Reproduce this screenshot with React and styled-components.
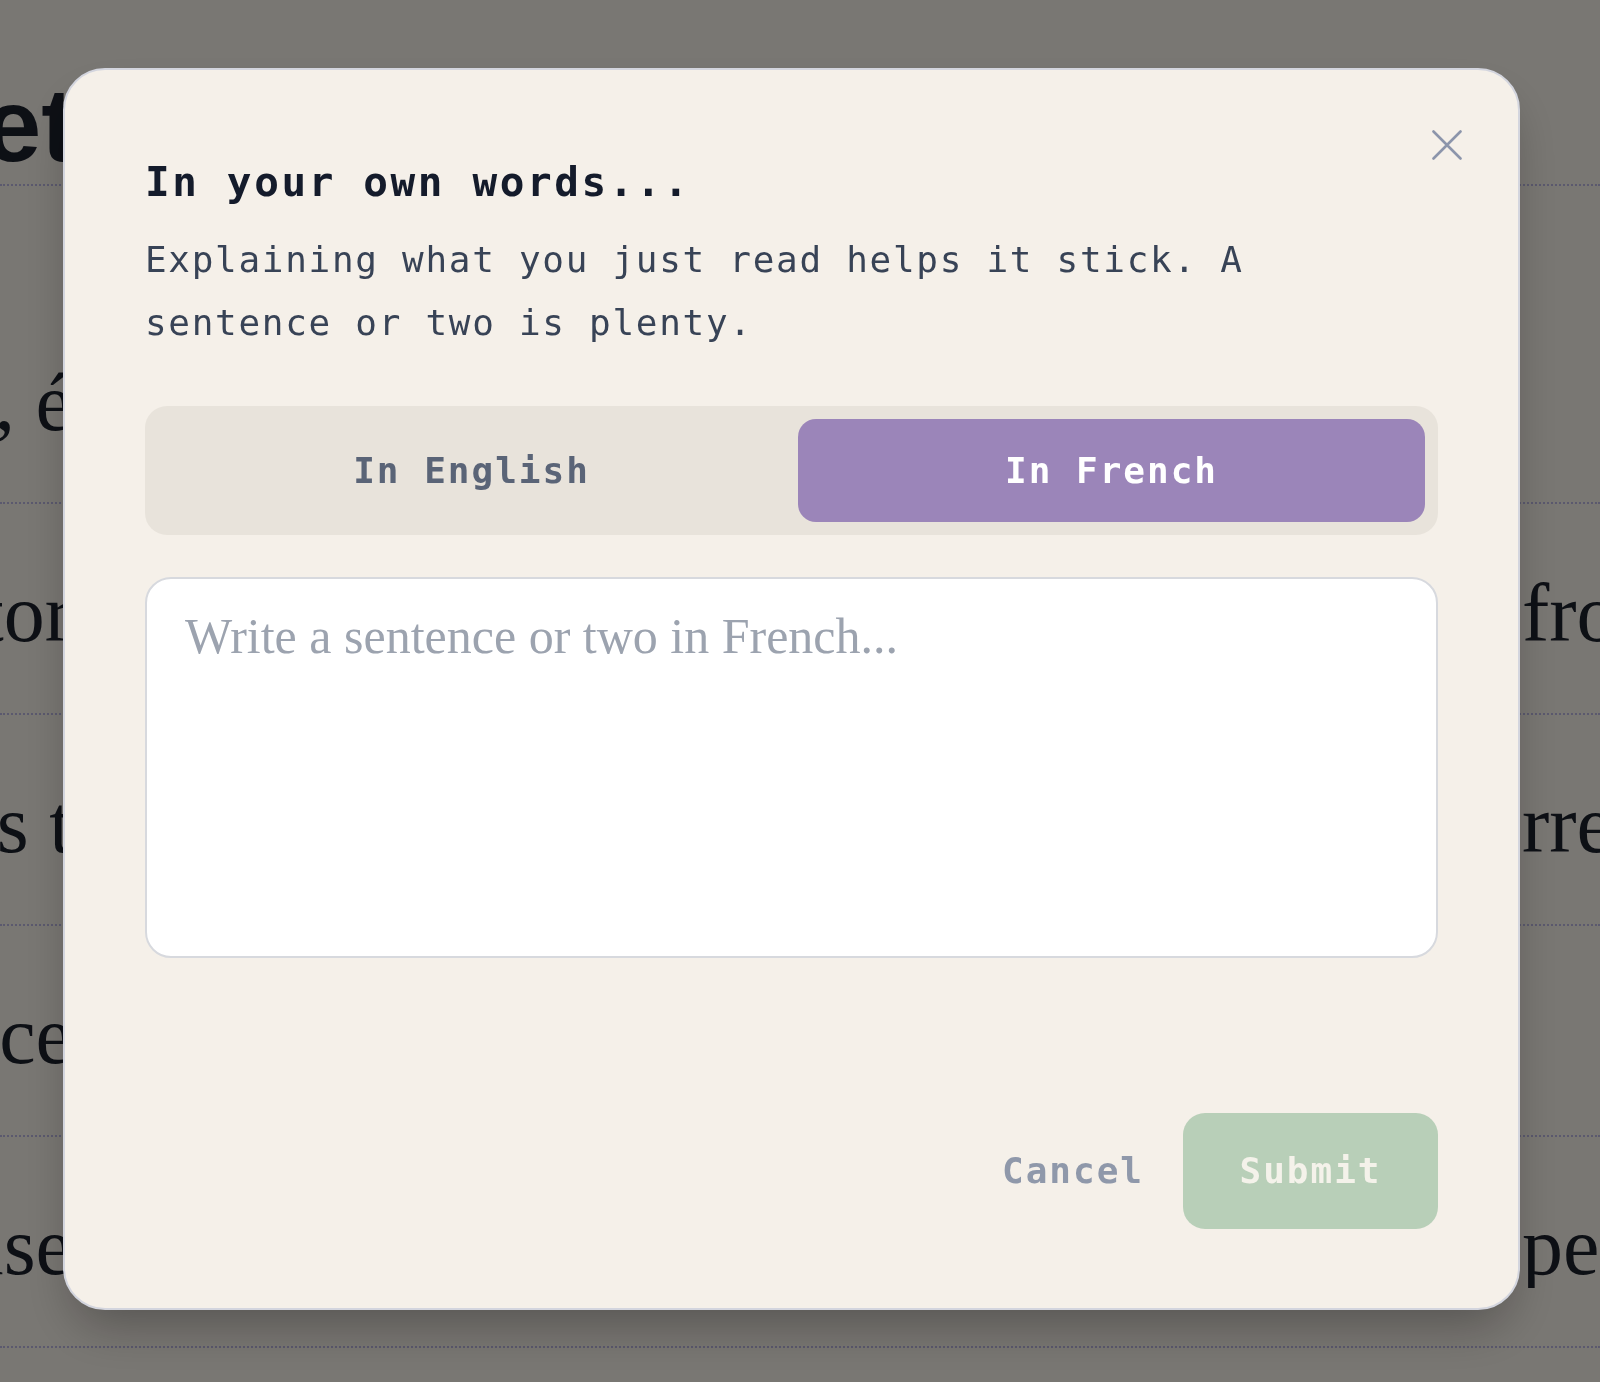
import React, { useState } from 'react'
import styled, { createGlobalStyle } from 'styled-components'

const mono = `"DejaVu Sans Mono", "Liberation Mono", monospace`

const GlobalStyle = createGlobalStyle`
  * { box-sizing: border-box; }
  html, body { margin: 0; padding: 0; }
  body {
    background: #f3eee6;
    font-family: "Liberation Serif", serif;
  }
`

/* page behind the dialog */

const Page = styled.div`
  height: 1382px;
  overflow: hidden;
  color: #1b202b;
`

const Heading = styled.h1`
  margin: 0 0 107px;
  padding: 73px 0 7px;
  font: 700 104px/1 "Liberation Sans", Arial, sans-serif;
  border-bottom: 2px dotted #b6b2dc;
  display: flex;
`

const Line = styled.div`
  height: 211px;
  display: flex;
  align-items: flex-end;
  justify-content: space-between;
  padding-bottom: 58px;
  border-bottom: 2px dotted #b6b2dc;
  font-size: 82px;
  line-height: 1;
`

const Clip = styled.span`
  width: ${p => p.$w}px;
  display: flex;
  justify-content: ${p => (p.$end ? 'flex-end' : 'flex-start')};
  overflow: hidden;
  white-space: nowrap;
`

/* dialog */

const Overlay = styled.div`
  position: fixed;
  inset: 0;
  background: rgba(0, 0, 0, 0.5);
  display: flex;
  align-items: flex-start;
  padding: 68px 80px 0 63px;
`

const Modal = styled.div`
  position: relative;
  flex: 1;
  background: #f5f0e9;
  border: 2px solid #d3d5de;
  border-radius: 42px;
  padding: 88px 80px 79px;
  box-shadow: 0 25px 50px -12px rgba(0, 0, 0, 0.3);
`

const CloseBtn = styled.button`
  position: absolute;
  top: 46px;
  right: 42px;
  width: 58px;
  height: 58px;
  border: none;
  background: none;
  padding: 0;
  display: flex;
  align-items: center;
  justify-content: center;
  color: #8c95ab;
  cursor: pointer;
`

const Title = styled.h2`
  margin: 0;
  font: 700 41px/49px ${mono};
  letter-spacing: 2.6px;
  color: #141b2b;
`

const Subtitle = styled.p`
  margin: 21px 0 0;
  font: 400 36px/63px ${mono};
  letter-spacing: 1.7px;
  color: #384356;
`

const Tabs = styled.div`
  margin-top: 52px;
  display: grid;
  grid-template-columns: 1fr 1fr;
  gap: 13px;
  padding: 13px;
  background: #e8e3db;
  border-radius: 22px;
`

const Tab = styled.button`
  height: 103px;
  border: none;
  border-radius: 18px;
  font: 700 36px/1 ${mono};
  letter-spacing: 2px;
  background: ${p => (p.$active ? '#9b85b9' : 'transparent')};
  color: ${p => (p.$active ? '#ffffff' : '#5a6477')};
  cursor: pointer;
`

const Answer = styled.textarea`
  margin-top: 42px;
  display: block;
  width: 100%;
  height: 381px;
  border: 2px solid #d7d9de;
  border-radius: 26px;
  background: #ffffff;
  padding: 20px 38px;
  font: 400 50px/1.5 "Liberation Serif", Georgia, serif;
  color: #1b202b;
  resize: none;
  outline: none;
  &::placeholder {
    color: #9ca3af;
  }
`

const Footer = styled.div`
  margin-top: 155px;
  display: flex;
  justify-content: flex-end;
  align-items: center;
  gap: 19px;
`

const CancelBtn = styled.button`
  border: none;
  background: none;
  padding: 0 20px;
  font: 700 36px/1 ${mono};
  letter-spacing: 2px;
  color: #8f98aa;
  cursor: pointer;
`

const SubmitBtn = styled.button`
  width: 255px;
  height: 116px;
  border: none;
  border-radius: 22px;
  background: #b8cfb8;
  color: #f4f2ea;
  font: 700 36px/1 ${mono};
  letter-spacing: 2px;
`

const rows = [
  ['poésie, é', ''],
  ['tor', 'from'],
  ['les t', 'rre'],
  ['ce', ''],
  ['use', 'pe'],
]

function CloseIcon() {
  return (
    <svg width="30" height="30" viewBox="0 0 30 30" fill="none">
      <path d="M1.5 1.5 28.5 28.5M28.5 1.5 1.5 28.5" stroke="currentColor" strokeWidth="2.6" strokeLinecap="round" />
    </svg>
  )
}

export default function App() {
  const [lang, setLang] = useState('fr')

  return (
    <>
      <GlobalStyle />
      <Page>
        <Heading>
          <Clip $w={76} $end>Le sujet</Clip>
        </Heading>
        {rows.map(([left, right], i) => (
          <Line key={i}>
            <Clip $w={72} $end>{left}</Clip>
            <Clip $w={78}>{right}</Clip>
          </Line>
        ))}
      </Page>

      <Overlay>
        <Modal>
          <CloseBtn aria-label="Close">
            <CloseIcon />
          </CloseBtn>
          <Title>In your own words...</Title>
          <Subtitle>
            Explaining what you just read helps it stick. A sentence or two is plenty.
          </Subtitle>
          <Tabs>
            <Tab $active={lang === 'en'} onClick={() => setLang('en')}>In English</Tab>
            <Tab $active={lang === 'fr'} onClick={() => setLang('fr')}>In French</Tab>
          </Tabs>
          <Answer placeholder="Write a sentence or two in French..." />
          <Footer>
            <CancelBtn>Cancel</CancelBtn>
            <SubmitBtn disabled>Submit</SubmitBtn>
          </Footer>
        </Modal>
      </Overlay>
    </>
  )
}
